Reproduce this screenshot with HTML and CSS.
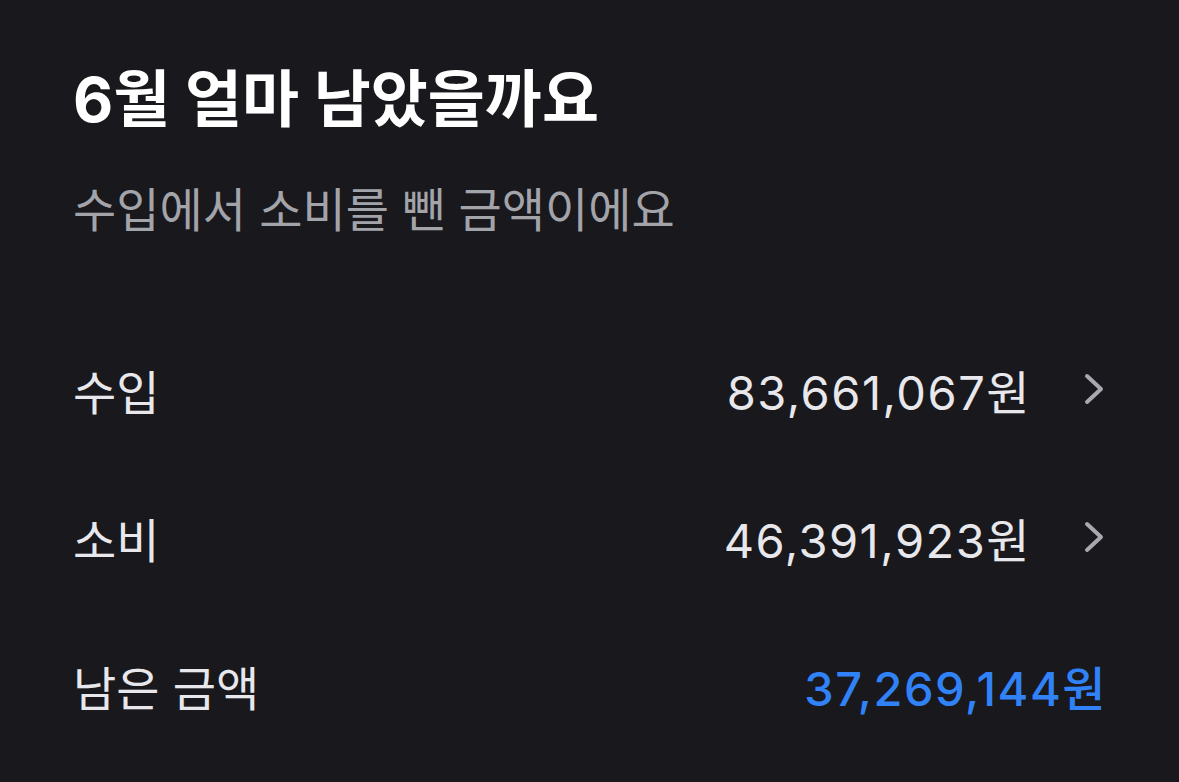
FILE: index.html
```html
<!DOCTYPE html>
<html lang="ko">
<head>
  <meta charset="UTF-8">
  <title>6월 얼마 남았을까요</title>
  <link rel="stylesheet" href="styles.css">
</head>
<body>
  <main class="summary">
    <h1 class="title">6월 얼마 남았을까요</h1>
    <p class="subtitle">수입에서 소비를 뺀 금액이에요</p>

    <ul class="rows">
      <li class="row">
        <span class="label">수입</span>
        <span class="amount">83,661,067원</span>
        <svg class="chevron" viewBox="0 0 20 32" width="20" height="32">
          <path d="M3 3 L17 16 L3 29" fill="none" stroke="currentColor" stroke-width="4" stroke-linecap="round" stroke-linejoin="round"/>
        </svg>
      </li>
      <li class="row">
        <span class="label">소비</span>
        <span class="amount">46,391,923원</span>
        <svg class="chevron" viewBox="0 0 20 32" width="20" height="32">
          <path d="M3 3 L17 16 L3 29" fill="none" stroke="currentColor" stroke-width="4" stroke-linecap="round" stroke-linejoin="round"/>
        </svg>
      </li>
      <li class="row total">
        <span class="label">남은 금액</span>
        <span class="amount">37,269,144원</span>
      </li>
    </ul>
  </main>
</body>
</html>
```

FILE: styles.css
```css
body {
  margin: 0;
  background-color: #18181d;
  color: #e8e8ec;
  font-family: "Inter", "Noto Sans CJK KR", sans-serif;
}

.summary {
  padding: 60px 75px 0 73px;
}

.title {
  margin: 0;
  font-size: 62px;
  font-weight: 700;
  line-height: 80px;
  color: #ffffff;
}

.subtitle {
  margin: 40px 0 0;
  font-size: 47px;
  line-height: 60px;
  color: #a3a3aa;
}

.rows {
  list-style: none;
  margin: 119px 0 0;
  padding: 0;
  display: flex;
  flex-direction: column;
  gap: 88px;
}

.row {
  display: flex;
  align-items: center;
  height: 60px;
  font-size: 47px;
}

.label {
  flex: 1;
  color: #e8e8ec;
}

.amount {
  color: #e8e8ec;
  letter-spacing: 1.5px;
  margin-right: -2px;
}

.chevron {
  margin-left: 55px;
  color: #a8a8b0;
}

.total .amount {
  color: #3182f6;
  font-weight: 500;
  letter-spacing: 1.5px;
  margin-right: -3px;
}
```
